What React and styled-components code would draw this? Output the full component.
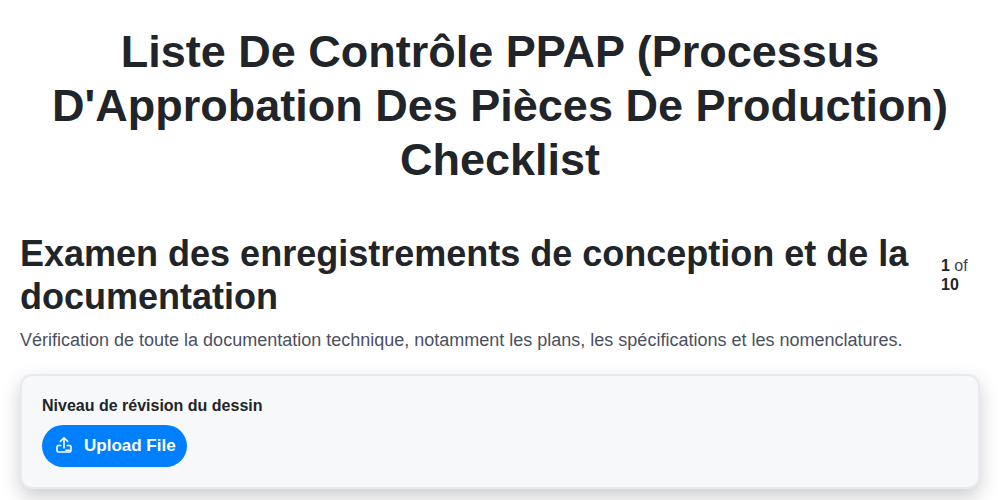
import React from "react";
import styled, { createGlobalStyle } from "styled-components";

const Global = createGlobalStyle`
  html, body { margin: 0; padding: 0; background: #fff; }
  body { font-family: "Liberation Sans", Arial, sans-serif; color: #212529; height: 500px; overflow: hidden; }
  * { box-sizing: border-box; }
`;
const Page = styled.div`
  padding: 25px 20px 0;
`;
const Title = styled.h1`
  margin: 0 0 45px;
  font-size: 45px;
  line-height: 54px;
  font-weight: 700;
  text-align: center;
  color: #212529;
`;
const Header = styled.div`
  display: flex;
  align-items: center;
  gap: 20px;
`;
const Heading = styled.h2`
  margin: 0;
  flex: 1;
  font-size: 36px;
  line-height: 43px;
  font-weight: 700;
`;
const Counter = styled.div`
  width: 39px;
  font-size: 16px;
  line-height: 19px;
  color: #3a4250;
  strong { font-weight: 700; color: #212529; }
`;
const Description = styled.p`
  margin: 9px 0 20px;
  font-size: 18px;
  line-height: 27px;
  color: #4a5060;
`;
const Card = styled.div`
  height: 115px;
  padding: 20px;
  background: #f7f8fa;
  border: 2px solid #e9e9f0;
  border-radius: 12px;
  box-shadow: 0 8px 20px rgba(0, 0, 0, 0.2);
`;
const Label = styled.div`
  font-size: 16px;
  line-height: 19px;
  font-weight: 700;
  margin-bottom: 10px;
`;
const UploadButton = styled.button`
  display: inline-flex;
  align-items: center;
  gap: 12px;
  height: 42px;
  padding: 0 11px 0 14px;
  border: 0;
  border-radius: 21px;
  background: #0080ff;
  color: #fff;
  font: 700 17px "Liberation Sans", Arial, sans-serif;
`;
const UploadIcon = () => (
  <svg width="16" height="18" viewBox="0 -2 16 18" fill="none" stroke="#fff" strokeWidth="1.6" strokeLinecap="round" strokeLinejoin="round">
    <path d="M8 9V-1M4.400 2.400 8-1.200l3.600 3.600" />
    <path d="M4.800 6.500H2.500A1.500 1.500 0 0 0 1 8v3.500A1.500 1.500 0 0 0 2.500 13h11a1.500 1.500 0 0 0 1.500-1.500V8a1.500 1.500 0 0 0-1.500-1.500h-2.300" />
    <path d="M10 11.200h4" />
  </svg>
);

export default function App() {
  return (
    <Page>
      <Global />
      <Title>Liste De Contrôle PPAP (Processus D'Approbation Des Pièces De Production) Checklist</Title>
      <Header>
        <Heading>Examen des enregistrements de conception et de la documentation</Heading>
        <Counter><strong>1</strong> of <strong>10</strong></Counter>
      </Header>
      <Description>Vérification de toute la documentation technique, notamment les plans, les spécifications et les nomenclatures.</Description>
      <Card>
        <Label>Niveau de révision du dessin</Label>
        <UploadButton><UploadIcon />Upload File</UploadButton>
      </Card>
    </Page>
  );
}
